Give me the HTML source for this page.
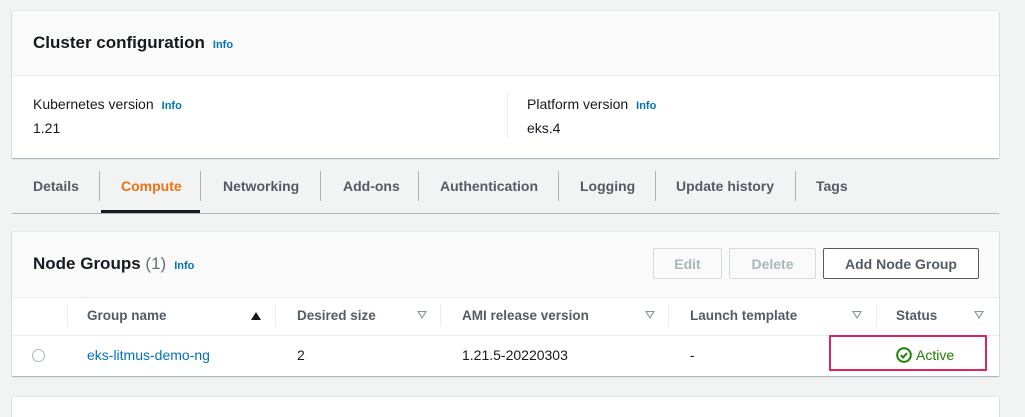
<!DOCTYPE html><html><head><style>
body{margin:0;width:1025px;height:406px;background:#f2f3f3;font-family:"Liberation Sans",sans-serif;color:#16191f;position:relative;overflow:hidden;font-size:14px}
.card{position:absolute;left:12px;width:987px;background:#fff;box-shadow:0 1px 1px rgba(0,31,63,.3),0 0 1px rgba(0,31,63,.25)}
.info{color:#0073bb;font-weight:bold;font-size:11px;margin-left:8px}
.a{position:absolute;white-space:nowrap}
.tab{position:absolute;top:178px;font-weight:bold;color:#545b64;font-size:14px}
.sep{position:absolute;top:171px;width:1px;height:30px;background:#aab7b8}
.btn{position:absolute;top:248px;height:31px;border:1px solid #d5dbdb;border-radius:2px;box-sizing:border-box;font-weight:bold;color:#aab7b8;display:flex;align-items:center;justify-content:center}
.th{position:absolute;top:308px;font-weight:bold;font-size:13.5px;color:#545b64}
.tri{position:absolute;top:311px;width:0;height:0;border-left:5px solid transparent;border-right:5px solid transparent;border-top:8px solid #879596}
.tri:after{content:"";position:absolute;left:-3px;top:-7px;border-left:3px solid transparent;border-right:3px solid transparent;border-top:5px solid #fff}
.cs{position:absolute;top:304px;width:1px;height:22px;background:#eaeded}
.td{position:absolute;top:347px;font-size:14px}
</style></head><body>
<div class="card" style="top:11px;height:147px">
 <div style="height:64px;background:#fafafa;border-bottom:1px solid #eaeded"></div>
 <div class="a" style="left:21px;top:22px;font-size:17px;font-weight:bold">Cluster configuration<span class="info">Info</span></div>
 <div class="a" style="left:21px;top:85px;font-size:14px">Kubernetes version<span class="info">Info</span></div>
 <div class="a" style="left:21px;top:109px;font-size:14px">1.21</div>
 <div style="position:absolute;left:495px;top:81px;width:1px;height:46px;background:#eaeded"></div>
 <div class="a" style="left:515px;top:85px;font-size:14px">Platform version<span class="info">Info</span></div>
 <div class="a" style="left:515px;top:109px;font-size:14px">eks.4</div>
</div>
<div class="tab" style="left:33px">Details</div><div class="sep" style="left:99px"></div>
<div class="tab" style="left:121px;color:#ec7211">Compute</div><div class="sep" style="left:200px"></div>
<div style="position:absolute;left:101px;top:210px;width:99px;height:3px;background:#16191f"></div>
<div class="tab" style="left:223px">Networking</div><div class="sep" style="left:320px"></div>
<div class="tab" style="left:343px">Add-ons</div><div class="sep" style="left:418px"></div>
<div class="tab" style="left:440px">Authentication</div><div class="sep" style="left:558px"></div>
<div class="tab" style="left:580px">Logging</div><div class="sep" style="left:655px"></div>
<div class="tab" style="left:676px">Update history</div><div class="sep" style="left:795px"></div>
<div class="tab" style="left:816px">Tags</div>
<div style="position:absolute;left:12px;top:213px;width:987px;height:1px;background:#aab7b8"></div>
<div class="card" style="top:232px;height:144px">
 <div style="height:65px;background:#fafafa;border-bottom:1px solid #eaeded"></div>
 <div style="position:absolute;top:103px;left:0;right:0;height:1px;background:#eaeded"></div>
</div>
<div class="a" style="left:33px;top:254px;font-size:17px;font-weight:bold">Node Groups <span style="font-weight:normal;color:#687078">(1)</span><span class="info">Info</span></div>
<div class="btn" style="left:653px;width:69px">Edit</div>
<div class="btn" style="left:729px;width:87px">Delete</div>
<div class="btn" style="left:823px;width:156px;border-color:#545b64;color:#545b64;background:#fff">Add Node Group</div>
<div class="cs" style="left:67px"></div>
<div class="th" style="left:87px">Group name</div>
<div style="position:absolute;left:251px;top:312px;border-left:5px solid transparent;border-right:5px solid transparent;border-bottom:8px solid #16191f"></div>
<div class="cs" style="left:275px"></div>
<div class="th" style="left:297px">Desired size</div><div class="tri" style="left:417px"></div>
<div class="cs" style="left:440px"></div>
<div class="th" style="left:462px">AMI release version</div><div class="tri" style="left:645px"></div>
<div class="cs" style="left:668px"></div>
<div class="th" style="left:690px">Launch template</div><div class="tri" style="left:852px"></div>
<div class="cs" style="left:876px"></div>
<div class="th" style="left:896px">Status</div><div class="tri" style="left:974px"></div>
<div style="position:absolute;left:32px;top:349px;width:11px;height:11px;border:1px solid #aab7b8;border-radius:50%;background:#fff"></div>
<div class="td" style="left:87px;color:#0073bb">eks-litmus-demo-ng</div>
<div class="td" style="left:297px">2</div>
<div class="td" style="left:462px">1.21.5-20220303</div>
<div class="td" style="left:690px">-</div>
<div style="position:absolute;left:829px;top:335px;width:158px;height:36px;border:2px solid #e0245e;box-sizing:border-box"></div>
<svg style="position:absolute;left:896px;top:347px" width="16" height="16" viewBox="0 0 16 16"><circle cx="8" cy="8" r="6.8" fill="none" stroke="#1d8102" stroke-width="2"/><path d="M4.8 8.2l2.2 2.2 4-4.2" fill="none" stroke="#1d8102" stroke-width="2"/></svg>
<div class="td" style="left:916px;color:#1d8102">Active</div>
<div class="card" style="top:397px;height:20px"></div>
</body></html>
